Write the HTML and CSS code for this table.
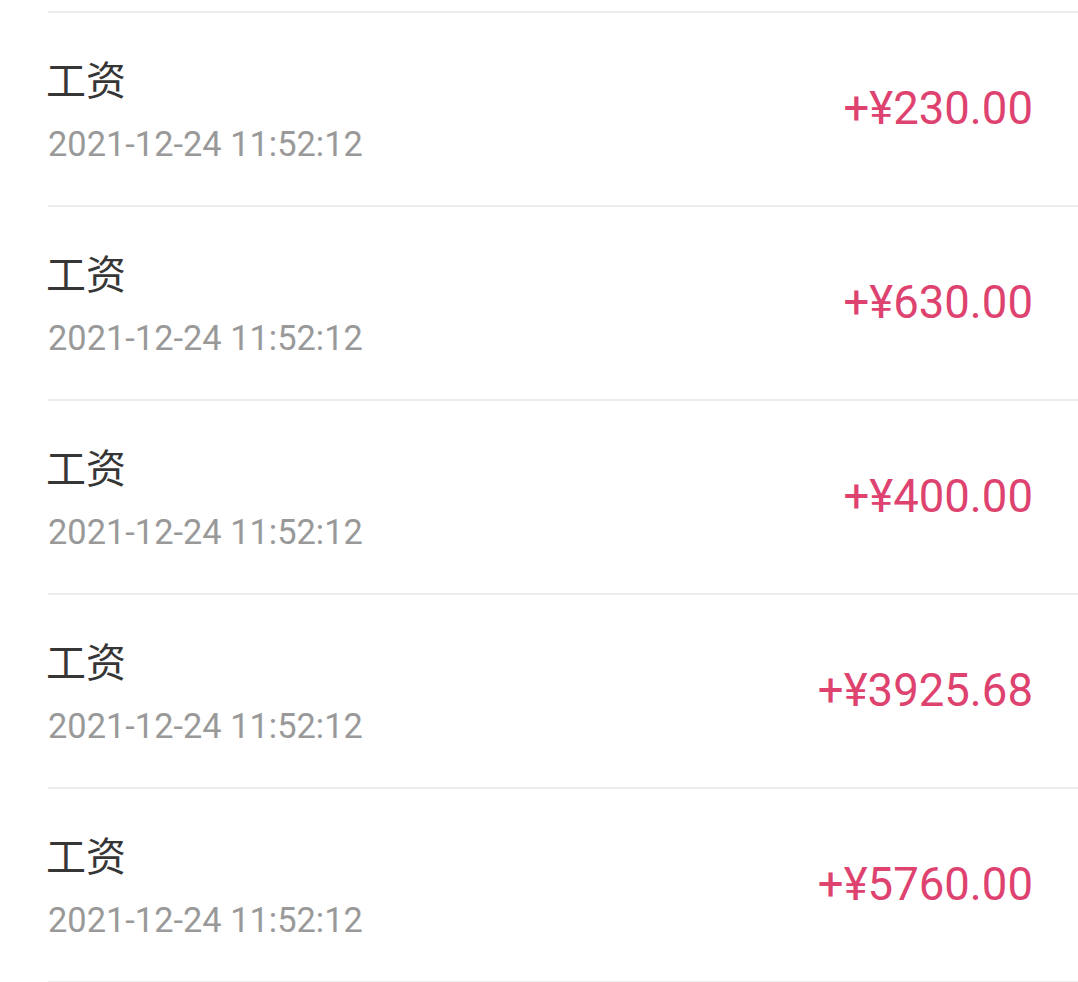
FILE: index.html
```html
<!DOCTYPE html>
<html lang="zh-CN">
  <head>
    <meta charset="UTF-8" />
    <title>收入明细</title>
    <link rel="stylesheet" href="styles.css">
  </head>
  <body>
    <ul class="record-list">
      <li class="record">
        <div class="record-info">
          <span class="record-title">工资</span>
          <span class="record-time">2021-12-24 11:52:12</span>
        </div>
        <span class="record-amount">+¥230.00</span>
      </li>
      <li class="record">
        <div class="record-info">
          <span class="record-title">工资</span>
          <span class="record-time">2021-12-24 11:52:12</span>
        </div>
        <span class="record-amount">+¥630.00</span>
      </li>
      <li class="record">
        <div class="record-info">
          <span class="record-title">工资</span>
          <span class="record-time">2021-12-24 11:52:12</span>
        </div>
        <span class="record-amount">+¥400.00</span>
      </li>
      <li class="record">
        <div class="record-info">
          <span class="record-title">工资</span>
          <span class="record-time">2021-12-24 11:52:12</span>
        </div>
        <span class="record-amount">+¥3925.68</span>
      </li>
      <li class="record">
        <div class="record-info">
          <span class="record-title">工资</span>
          <span class="record-time">2021-12-24 11:52:12</span>
        </div>
        <span class="record-amount">+¥5760.00</span>
      </li>
    </ul>
  </body>
</html>
```

FILE: styles.css
```css
/* General styles */
* {
  box-sizing: border-box;
}

body {
  margin: 0;
  padding: 0;
  background-color: #fff;
  font-family: Roboto, "Noto Sans CJK SC", sans-serif;
}

.record-list {
  list-style: none;
  margin: 0;
  padding: 11px 0 0 48px;
}

.record {
  display: flex;
  align-items: center;
  justify-content: space-between;
  height: 194px;
  padding-right: 45px;
  border-top: 2px solid #ececec;
}

.record:last-child {
  height: 196px;
  border-bottom: 2px solid #ececec;
}

.record-info {
  display: flex;
  flex-direction: column;
  gap: 19px;
}

.record-title {
  margin-left: -2px;
  font-family: "Noto Sans CJK SC", sans-serif;
  font-size: 40px;
  line-height: 50px;
  color: #363636;
}

.record-time {
  font-size: 34.4px;
  line-height: 44px;
  color: #999;
}

.record-amount {
  font-size: 45.5px;
  line-height: 56px;
  color: #de426f;
}
```
